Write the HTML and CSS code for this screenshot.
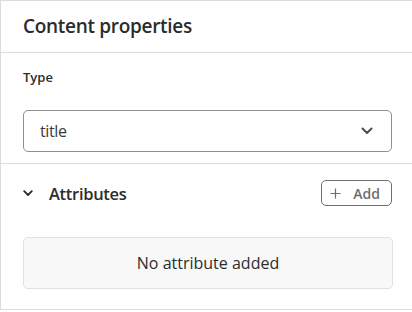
FILE: index.html
```html
<!DOCTYPE html>
<html>
<head>
<meta charset="utf-8">
<link rel="stylesheet" href="styles.css">
</head>
<body>
<div class="panel">
  <div class="header">Content properties</div>
  <div class="section">
    <div class="label">Type</div>
    <div class="select">
      <span class="select-value">title</span>
      <svg class="chev" width="12" height="8" viewBox="0 0 12 8"><path d="M1.5 1.5 L6 6 L10.5 1.5" fill="none" stroke="#4b4b4b" stroke-width="2" stroke-linecap="round" stroke-linejoin="round"/></svg>
    </div>
  </div>
  <div class="attrs">
    <div class="attrs-head">
      <div class="attrs-title">
        <svg class="chev-small" width="10" height="7" viewBox="0 0 10 7"><path d="M1.2 1.2 L5 5 L8.8 1.2" fill="none" stroke="#2c2c2c" stroke-width="1.8" stroke-linecap="round" stroke-linejoin="round"/></svg>
        <span>Attributes</span>
      </div>
      <button class="add">
        <svg class="plus" width="11" height="11" viewBox="0 0 11 11"><path d="M5.5 0.5 V10.5 M0.5 5.5 H10.5" fill="none" stroke="#6e6e6e" stroke-width="1.2"/></svg>
        <span>Add</span>
      </button>
    </div>
    <div class="empty">No attribute added</div>
  </div>
</div>
</body>
</html>
```
FILE: styles.css
```css
html, body { margin: 0; padding: 0; background: #fff; }
body { font-family: "Open Sans", "Noto Sans", sans-serif; color: #2c2c2c; }
.panel {
  width: 412px;
  height: 310px;
  box-sizing: border-box;
  border-top: 1px solid #dcdcdc;
  border-left: 1px solid #dcdcdc;
  border-bottom: 1px solid #dcdcdc;
}
.header {
  height: 52px;
  box-sizing: border-box;
  border-bottom: 1px solid #dcdcdc;
  padding: 13px 0 0 22px;
  font-size: 19px;
  font-weight: 600;
  letter-spacing: -0.3px;
  line-height: 24px;
}
.section {
  height: 111px;
  box-sizing: border-box;
  border-bottom: 1px solid #dcdcdc;
  padding: 15px 20px 0 22px;
}
.label {
  font-size: 13px;
  font-weight: 600;
  line-height: 18px;
  height: 18px;
}
.select {
  margin-top: 24px;
  height: 42px;
  box-sizing: border-box;
  border: 1px solid #909090;
  border-radius: 5px;
  display: flex;
  align-items: center;
  justify-content: space-between;
  padding: 0 18px 0 16px;
}
.select-value { font-size: 16px; color: #3a3a3a; letter-spacing: -0.4px; }
.attrs { padding: 15px 19px 0 22px; }
.attrs-head {
  display: flex;
  justify-content: space-between;
  align-items: center;
  height: 28px;
}
.attrs-title {
  display: flex;
  align-items: center;
  gap: 16px;
  font-size: 16.5px;
  font-weight: 600;
  letter-spacing: -0.3px;
}
.add {
  font-family: inherit;
  height: 26px;
  box-sizing: border-box;
  border: 1px solid #6e6e6e;
  border-radius: 5px;
  background: #fff;
  color: #6e6e6e;
  font-size: 14px;
  font-weight: 600;
  display: flex;
  align-items: center;
  gap: 12px;
  padding: 0 11px 0 8px;
  margin-right: 1px;
}
.empty {
  margin-top: 30px;
  height: 52px;
  box-sizing: border-box;
  border: 1px solid #e1e1e1;
  border-radius: 5px;
  background: #f8f8f8;
  display: flex;
  align-items: center;
  justify-content: center;
  font-size: 16px;
  color: #2c2c2c;
}
```
